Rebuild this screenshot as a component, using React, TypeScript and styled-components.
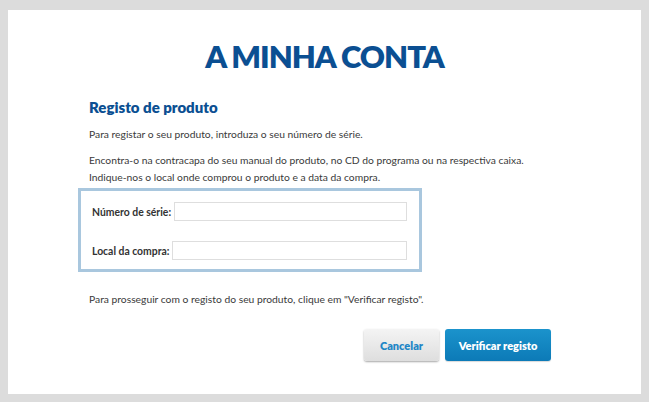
import styled, { createGlobalStyle } from 'styled-components';

const GlobalStyle = createGlobalStyle`
  html, body {
    margin: 0;
    padding: 0;
    background: #dcdcdc;
  }
  body {
    font-family: Lato, "Open Sans", Arial, sans-serif;
  }
`;

const Page = styled.div`
  width: 649px;
  height: 402px;
  box-sizing: border-box;
  padding: 10px 8px 8px 8px;
  background: #dcdcdc;
`;

const Panel = styled.div`
  height: 100%;
  background: #fff;
  box-sizing: border-box;
  padding: 26px 0 0 81px;
  display: flex;
  flex-direction: column;
`;

const Title = styled.h1`
  margin: 0 0 0 -81px;
  text-align: center;
  font-size: 31px;
  line-height: 40px;
  font-weight: 800;
  color: #0b4f92;
  letter-spacing: -1px;
`;

const Heading = styled.h2`
  margin: 21px 0 0 0;
  font-size: 15px;
  line-height: 20px;
  font-weight: 800;
  color: #0b4f92;
`;

const Text = styled.p<{ $top: number }>`
  margin: ${(p) => p.$top}px 0 0 0;
  font-size: 10.3px;
  line-height: 17px;
  color: #3a3a3a;
`;

const FormBox = styled.div`
  margin: 2px 0 0 -11px;
  width: 344px;
  height: 84px;
  box-sizing: border-box;
  border: 3px solid #a9c7de;
  padding: 11px 12px 0 11px;
  display: flex;
  flex-direction: column;
  gap: 20px;
`;

const Row = styled.div`
  display: flex;
  align-items: center;
  height: 19px;
`;

const Label = styled.label`
  font-size: 10.4px;
  font-weight: 700;
  color: #333;
  white-space: nowrap;
  margin-right: 3px;
`;

const Input = styled.input`
  flex: 1;
  height: 19px;
  box-sizing: border-box;
  border: 1px solid #dedede;
  background: #fff;
  padding: 0 4px;
  outline: none;
`;

const Actions = styled.div`
  display: flex;
  gap: 6px;
  margin: 21px 0 0 275px;
`;

const Button = styled.button<{ $primary?: boolean }>`
  height: 32px;
  padding: 0;
  width: ${(p) => (p.$primary ? 106 : 75)}px;
  border-radius: 3px;
  border: none;
  font-family: inherit;
  font-size: 11px;
  font-weight: 800;
  cursor: pointer;
  color: ${(p) => (p.$primary ? '#fff' : '#1f86c6')};
  background: ${(p) =>
    p.$primary
      ? 'linear-gradient(#1b93cc, #0c7ab7)'
      : 'linear-gradient(#f4f4f4, #dedede)'};
  box-shadow: ${(p) =>
    p.$primary ? '0 1px 1px rgba(0,0,0,0.15)' : '0 1px 2px rgba(0,0,0,0.35)'};
`;

export default function App() {
  return (
    <>
      <GlobalStyle />
      <Page>
        <Panel>
          <Title>A MINHA CONTA</Title>
          <Heading>Registo de produto</Heading>
          <Text $top={9}>Para registar o seu produto, introduza o seu número de série.</Text>
          <Text $top={9}>
            Encontra-o na contracapa do seu manual do produto, no CD do programa ou na respectiva caixa.
            <br />
            Indique-nos o local onde comprou o produto e a data da compra.
          </Text>
          <FormBox>
            <Row>
              <Label>Número de série:</Label>
              <Input />
            </Row>
            <Row>
              <Label>Local da compra:</Label>
              <Input />
            </Row>
          </FormBox>
          <Text $top={19}>Para prosseguir com o registo do seu produto, clique em "Verificar registo".</Text>
          <Actions>
            <Button>Cancelar</Button>
            <Button $primary>Verificar registo</Button>
          </Actions>
        </Panel>
      </Page>
    </>
  );
}
